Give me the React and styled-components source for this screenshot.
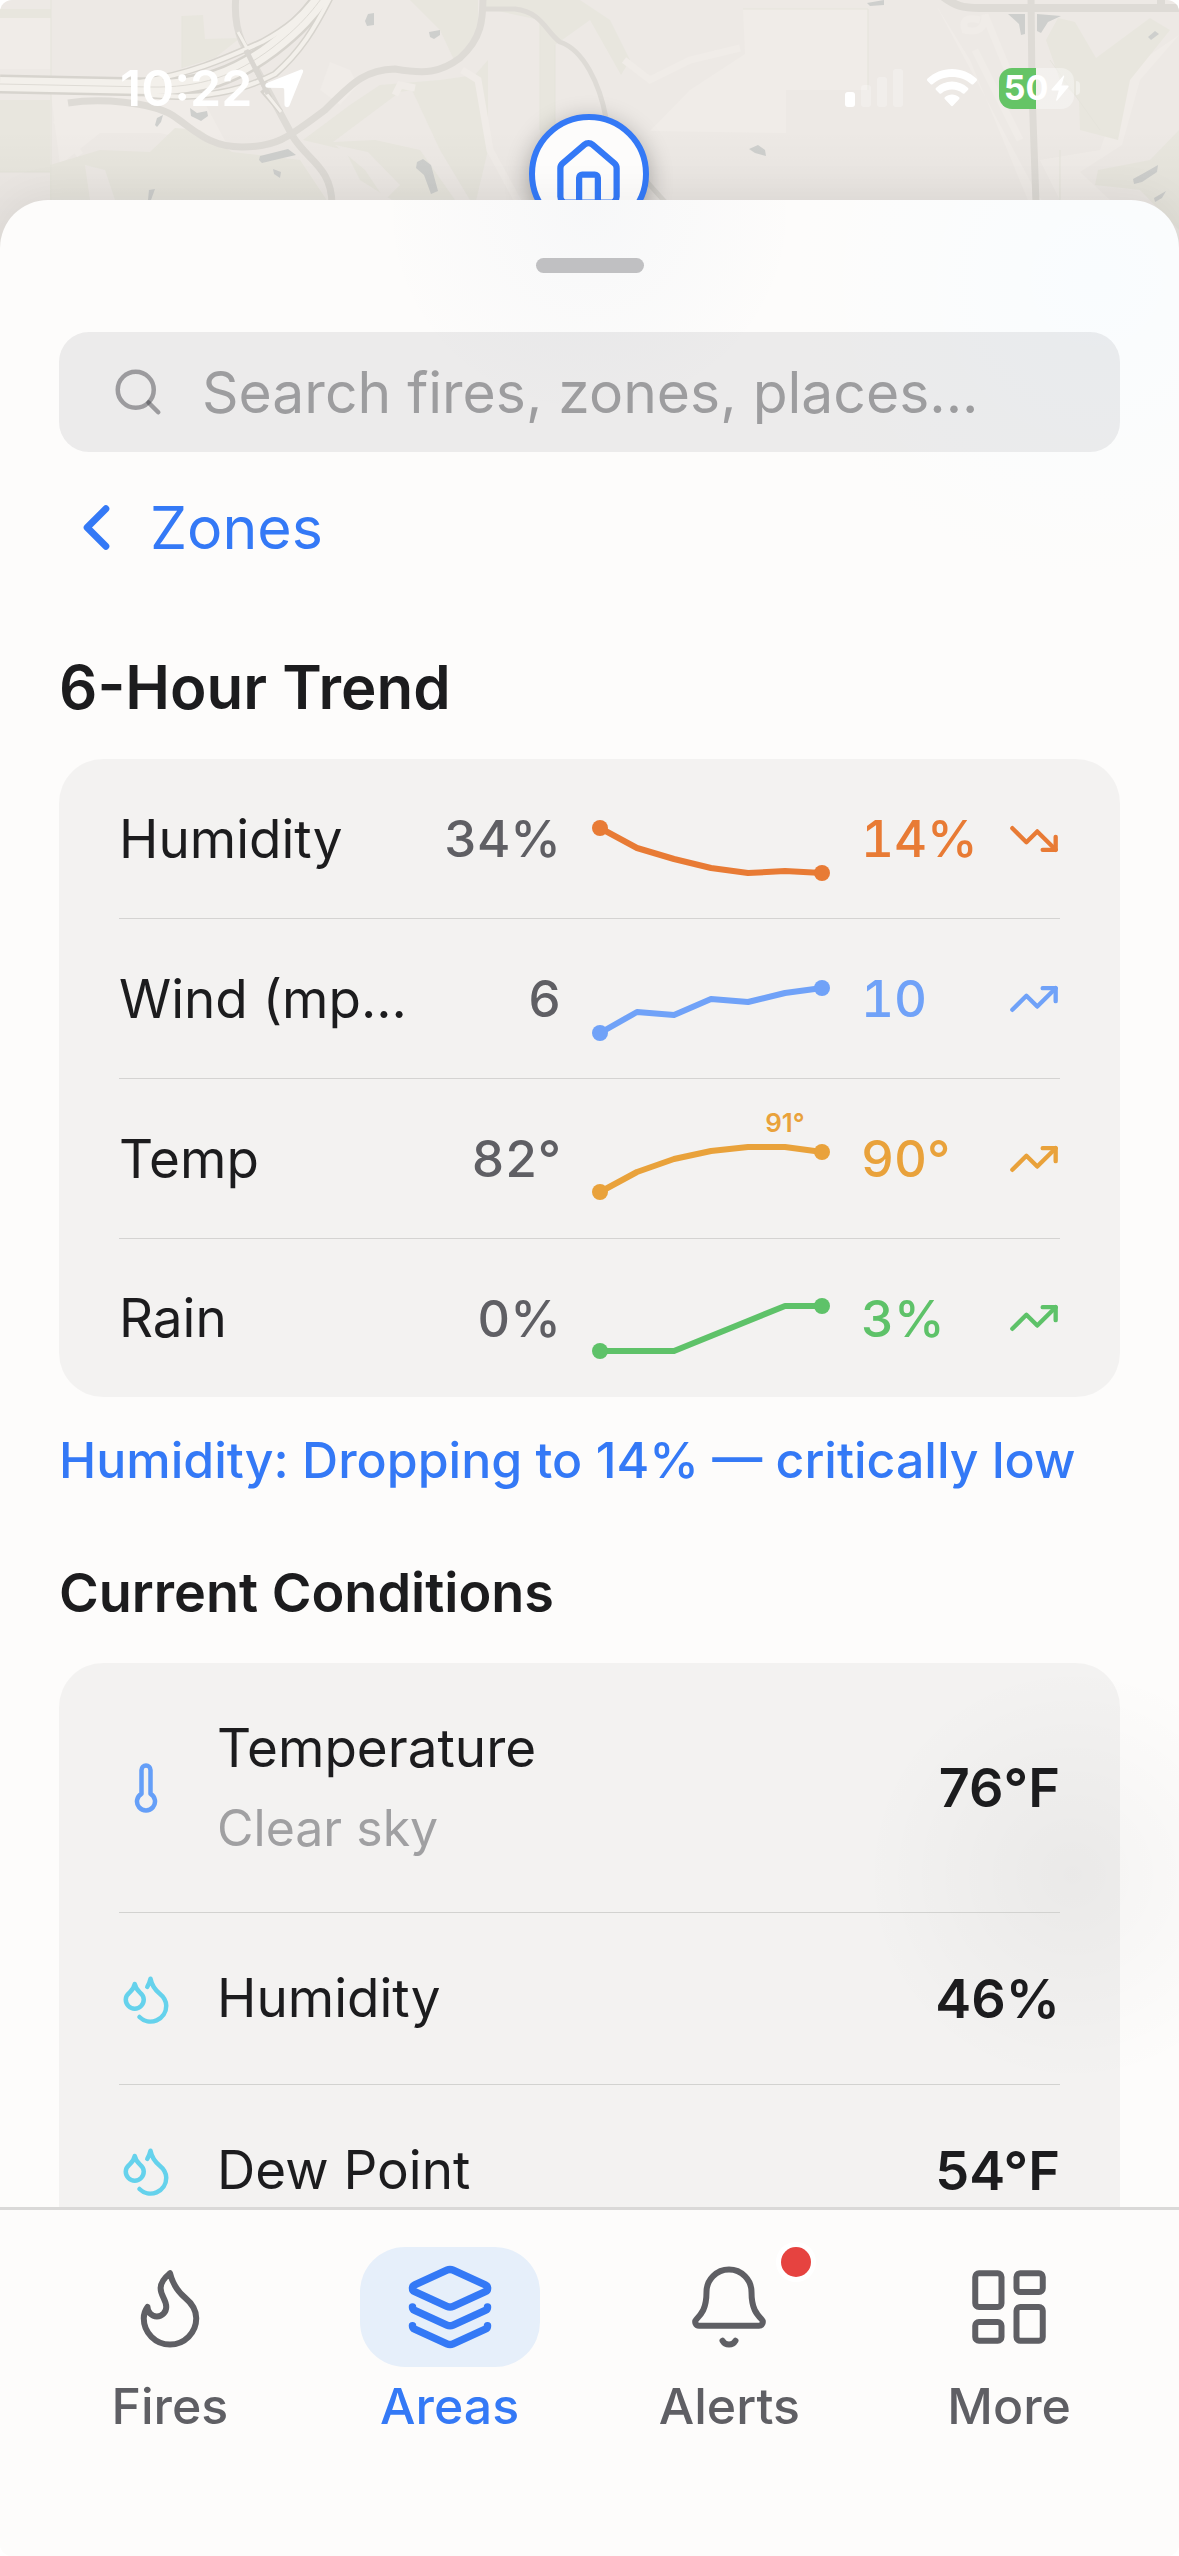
import React from "react";
import styled, { createGlobalStyle } from "styled-components";
import {
  Bell,
  ChevronLeft,
  Droplets,
  Flame,
  House,
  Layers,
  LayoutDashboard,
  Search,
  Thermometer,
  TrendingDown,
  TrendingUp,
} from "lucide-react";

const trends = [
  {
    label: "Humidity",
    from: "34%",
    to: "14%",
    color: "#e87b35",
    Icon: TrendingDown,
    points: [31, 51, 62, 71, 76, 74, 76],
  },
  {
    label: "Wind (mp...",
    from: "6",
    to: "10",
    color: "#70a2f8",
    Icon: TrendingUp,
    points: [76, 55, 58, 42, 45, 36, 31],
  },
  {
    label: "Temp",
    from: "82°",
    to: "90°",
    color: "#e9a23b",
    Icon: TrendingUp,
    points: [75, 55, 42, 34, 30, 30, 35],
    peak: { index: 5, text: "91°" },
  },
  {
    label: "Rain",
    from: "0%",
    to: "3%",
    color: "#5ec269",
    Icon: TrendingUp,
    points: [75, 75, 75, 60, 45, 30, 30],
  },
];

const conditions = [
  {
    label: "Temperature",
    note: "Clear sky",
    value: "76°F",
    color: "#659ff8",
    Icon: Thermometer,
  },
  { label: "Humidity", value: "46%", color: "#65d2ec", Icon: Droplets },
  { label: "Dew Point", value: "54°F", color: "#65d2ec", Icon: Droplets },
];

const tabs = [
  { label: "Fires", Icon: Flame },
  { label: "Areas", Icon: Layers, active: true },
  { label: "Alerts", Icon: Bell, alert: true },
  { label: "More", Icon: LayoutDashboard },
];

const Sparkline = ({ points, color, peak }) => {
  const x = index => 9 + index * 37;
  const last = points.length - 1;
  return (
    <ChartSvg width="240" height="84" viewBox="0 0 240 84" aria-hidden="true">
      <polyline
        points={points.map((y, index) => `${x(index)},${y}`).join(" ")}
        fill="none"
        stroke={color}
        strokeWidth="6"
        strokeLinejoin="round"
      />
      <circle cx={x(0)} cy={points[0]} r="8" fill={color} />
      <circle cx={x(last)} cy={points[last]} r="8" fill={color} />
      {peak && (
        <PeakText x={x(peak.index)} y="15" fill={color} textAnchor="middle">
          {peak.text}
        </PeakText>
      )}
    </ChartSvg>
  );
};

const MapDrawing = () => (
  <MapSvg viewBox="0 0 1179 260" preserveAspectRatio="xMidYMin slice" aria-hidden="true">
    <defs>
      <linearGradient id="mapShade" x1="0" y1="0" x2="0" y2="1">
        <stop offset="0.5" stopColor="#000" stopOpacity="0" />
        <stop offset="0.78" stopColor="#000" stopOpacity="0.03" />
        <stop offset="1" stopColor="#000" stopOpacity="0.05" />
      </linearGradient>
    </defs>
    <rect width="1179" height="260" fill="#ede9e5" />

    <g fill="#f0ece8">
      <path d="M0 18H51V69H0Z" />
      <path d="M51 94H200L230 150L160 133L100 133L60 165Z" />
      <path d="M330 62L350 70L358 85L340 105L320 90Z" />
      <path d="M743 9H868V90H824L786 90V133L650 131L690 90L745 54Z" />
      <path d="M936 5L1035 190L1045 205H1030L970 60Z" />
      <path d="M1179 35L1140 80L1122 145L1080 172L1110 200H1060L1040 160L1100 150L1128 70Z" />
    </g>
    <g fill="#e8e6de">
      <path d="M0 9H51V18H0Z" />
      <path d="M182 16L203 15L205 39L240 38L215 58L182 68Z" />
      <path d="M0 100H50V172H0Z" />
      <path d="M50 165L100 150L150 152L175 128L200 130L232 152L300 160L330 205H50Z" />
      <path d="M303 140L350 105L380 85L440 80L475 75L488 60V150L475 205H400L360 180L345 150Z" />
      <path d="M410 0H478V30L455 62L440 30Z" />
      <path d="M484 0H580L610 20L630 60L621 75L590 20L555 45V140H540V20L484 8Z" />
      <path d="M1046 40L1058 18L1075 22L1096 58L1150 18L1170 30L1130 80L1118 140L1080 130L1079 100L1060 80Z" />
      <path d="M1098 170L1150 160L1179 130V230L1140 190L1095 185Z" />
    </g>
    <g fill="#ede9e5">
      <path d="M335 145L368 152L400 185L385 200L365 170Z" />
      <path d="M400 92L412 90L440 150L470 200H455L420 150L375 140L333 142Z" />
      <path d="M85 165L105 170L115 200H90Z" />
    </g>
    <g fill="none" stroke="#e5e4db" strokeWidth="1">
      <path d="M51 0V200M182 16V68M555 45V140M868 9V90M540 20V130" />
      <path d="M0 172H50M743 9H868M1050 60L1100 130M1060 200V150" />
    </g>
    <g fill="none" stroke="#f0ece8" strokeWidth="7">
      <path d="M395 95L400 85L415 88M56 120L80 155M462 70L478 80L490 150L520 205" />
      <path d="M980 20Q960 15 965 30Q985 35 985 15L1020 100M975 50L1020 140" />
      <path d="M624 60L650 80L690 60L740 48" />
    </g>

    <g fill="none" stroke="#dedbd6" strokeWidth="7">
      <path d="M236 -5C234 15 236 28 242 42L292 135C306 160 332 166 332 205" />
      <path d="M68 103C100 98 150 102 172 115C195 130 208 147 242 147C278 147 290 136 325 110C350 86 362 70 395 69C425 74 440 73 460 58C482 38 483 20 483 -5" />
      <path d="M1031 -5L1032 90L1038 260" />
      <path d="M935 -10C955 8 965 8 980 8H1179M1161 -5V8" strokeWidth="8" />
      <path d="M484 9H515C542 12 546 32 560 42C584 50 600 85 606 118C622 155 640 175 668 205" strokeWidth="5" />
    </g>

    <g fill="none" strokeLinecap="butt">
      <g stroke="#d7d4ce">
        <path d="M0 84L150 87C200 88 235 76 272 48C298 28 312 12 326 -8" strokeWidth="19" />
        <path d="M140 82C190 74 222 60 262 42C288 28 302 16 318 -6" strokeWidth="7" />
        <path d="M150 95C200 100 240 92 275 74C300 52 314 30 332 -6" strokeWidth="7" />
        <path d="M238 32L270 98M262 90L281 112" strokeWidth="5" />
      </g>
      <g stroke="#f3f0eb">
        <path d="M0 84L150 87C200 88 235 76 272 48C298 28 312 12 326 -8" strokeWidth="14" />
        <path d="M140 82C190 74 222 60 262 42C288 28 302 16 318 -6" strokeWidth="4" />
        <path d="M150 95C200 100 240 92 275 74C300 52 314 30 332 -6" strokeWidth="4" />
        <path d="M238 32L248 50M265 92L281 112" strokeWidth="3" />
      </g>
      <path d="M0 84L150 87C200 88 235 76 272 48C298 28 312 12 326 -8" stroke="#dedbd5" strokeWidth="1" />
      <path d="M246 50L268 94" stroke="#d9d6d1" strokeWidth="5" />
    </g>

    <g fill="#cecfcd">
      <path d="M368 14L374 13V25L367 26L365 21Z" />
      <path d="M429 32L440 30V35L434 39L430 37Z" />
      <path d="M190 108L197 113L207 111L208 116L201 121L191 116Z" />
      <path d="M157 118L163 115L161 122L157 127L155 125Z" />
      <path d="M260 156L288 149L296 155L283 158L262 163L259 160Z" />
      <path d="M273 169L281 172L280 178L274 174Z" />
      <path d="M417 162L423 159L431 165L438 191L431 194L424 175L416 168Z" />
      <path d="M149 190L155 189L151 200H148Z" />
      <path d="M749 149L758 145L765 150L766 156L755 153Z" />
      <path d="M1008 14H1025V34L1021 35L1019 24Z" />
      <path d="M1037 14L1061 16L1048 22L1041 33L1037 31Z" />
      <path d="M1148 37L1155 31L1159 34L1151 40Z" />
      <path d="M1133 179L1144 173L1158 165L1157 172L1142 182L1134 184Z" />
      <path d="M1154 198L1166 191L1162 198L1155 202Z" />
      <path d="M867 3L884 0V5L870 6Z" />
    </g>
    <rect width="1179" height="260" fill="url(#mapShade)" />
  </MapSvg>
);

const StatusBar = () => (
  <StatusRow>
    <Clock>
      10:22
      <svg width="40" height="40" viewBox="0 0 40 40" aria-hidden="true">
        <path
          d="M37 1.600C38.600 1 39.600 2.400 39 4L25.500 37.500C24.400 40 20.600 39.600 20.500 36.800L20.200 21.800C20.200 20.600 19.600 20 18.400 20L4 19.700C0.800 19.600 0.400 16 3 14.900Z"
          fill="#fff"
        />
      </svg>
    </Clock>
    <Indicators>
      <svg width="60" height="38" viewBox="0 0 60 38" aria-hidden="true">
        <rect y="23" width="10" height="15" rx="3" fill="#fff" />
        <rect x="16" y="16" width="10" height="22" rx="3" fill="#fff" opacity="0.25" />
        <rect x="32" y="8" width="10" height="30" rx="3" fill="#fff" opacity="0.25" />
        <rect x="48" width="10" height="38" rx="3" fill="#fff" opacity="0.25" />
      </svg>
      <svg width="50" height="38" viewBox="0 0 50 38" fill="#fff" aria-hidden="true">
        <path d="M25 0C34.500 0 43 3.600 49.400 9.600C50.200 10.400 50.200 11.200 49.500 12L46.500 15C45.800 15.700 45 15.700 44.200 15C39 10.400 32.300 8 25 8C17.700 8 11 10.400 5.800 15C5 15.700 4.200 15.700 3.500 15L0.500 12C-0.200 11.200 -0.200 10.400 0.600 9.600C7 3.600 15.500 0 25 0Z" />
        <path d="M25 12.600C31 12.600 36.500 14.900 40.800 18.700C41.600 19.400 41.600 20.200 40.900 21L37.700 24.200C37 24.900 36.200 24.900 35.400 24.300C32.500 21.900 29 20.600 25 20.600C21 20.600 17.500 21.900 14.600 24.300C13.800 24.900 13 24.900 12.300 24.200L9.100 21C8.400 20.200 8.400 19.400 9.200 18.700C13.500 14.900 19 12.600 25 12.600Z" />
        <path d="M25 25.500C27.600 25.500 30 26.400 31.900 28C32.700 28.700 32.700 29.500 32 30.200L26.100 36.600C25.400 37.400 24.600 37.400 23.900 36.600L18 30.200C17.300 29.500 17.300 28.700 18.100 28C20 26.400 22.400 25.500 25 25.500Z" />
      </svg>
      <Battery>
        <BatteryBody>
          50
          <svg width="18" height="26" viewBox="0 0 18 26" aria-hidden="true">
            <path d="M12.500 0.500L0.600 14.200Q0 15.500 1.400 15.500H7.800L5 25.200Q5.400 26 6.200 25.400L17.600 11.800Q18 10.500 16.700 10.500H10.400L13.300 1Q13.200 0.200 12.500 0.500Z" fill="#fff" />
          </svg>
        </BatteryBody>
        <BatteryTip />
      </Battery>
    </Indicators>
  </StatusRow>
);

const TrendCard = () => (
  <Card>
    {trends.map(({ label, from, to, color, Icon, points, peak }) => (
      <TrendRow key={label}>
        <TrendLabel>{label}</TrendLabel>
        <TrendFrom>{from}</TrendFrom>
        <Sparkline points={points} color={color} peak={peak} />
        <TrendTo $color={color}>{to}</TrendTo>
        <Icon size={52} color={color} aria-hidden="true" />
      </TrendRow>
    ))}
  </Card>
);

const ConditionsCard = () => (
  <Card>
    {conditions.map(({ label, note, value, color, Icon }) => (
      <ConditionRow key={label}>
        <Icon size={54} color={color} aria-hidden="true" />
        <ConditionText>
          <ConditionLabel>{label}</ConditionLabel>
          {note && <ConditionNote>{note}</ConditionNote>}
        </ConditionText>
        <ConditionValue>{value}</ConditionValue>
      </ConditionRow>
    ))}
  </Card>
);

const TabBar = () => (
  <Nav aria-label="Main">
    {tabs.map(({ label, Icon, active, alert }) => (
      <Tab
        key={label}
        type="button"
        $active={active}
        aria-current={active ? "page" : undefined}
      >
        <TabIcon $active={active}>
          <Icon size={90} strokeWidth={active ? 2 : 1.6} aria-hidden="true" />
          {alert && <AlertDot />}
        </TabIcon>
        {label}
      </Tab>
    ))}
  </Nav>
);

const App = () => (
  <Screen>
    <GlobalStyle />
    <MapHeader>
      <MapDrawing />
      <StatusBar />
      <HomePin>
        <House size={75} aria-hidden="true" />
      </HomePin>
    </MapHeader>
    <Sheet>
      <Handle />
      <SearchBox>
        <Search size={54} aria-hidden="true" />
        <SearchInput
          type="text"
          aria-label="Search"
          placeholder="Search fires, zones, places..."
        />
      </SearchBox>
      <BackButton type="button">
        <ChevronLeft size={75} strokeWidth={2.2} aria-hidden="true" />
        Zones
      </BackButton>
      <MainTitle>6-Hour Trend</MainTitle>
      <TrendCard />
      <TrendNote>Humidity: Dropping to 14% — critically low</TrendNote>
      <SubTitle>Current Conditions</SubTitle>
      <ConditionsCard />
    </Sheet>
    <TabBar />
  </Screen>
);

export default App;

const GlobalStyle = createGlobalStyle`
  * {
    box-sizing: border-box;
  }
  body {
    margin: 0;
    background: #fff;
    color: #1c1c1e;
    font-family: Inter, "Liberation Sans", sans-serif;
  }
  h1, h2, p, ul {
    margin: 0;
    padding: 0;
  }
  button, input {
    font-family: inherit;
    border: 0;
    background: none;
    padding: 0;
  }
  svg {
    display: block;
    flex: none;
  }
`;

const Screen = styled.div`
  display: flex;
  flex-direction: column;
  height: 100vh;
  overflow: hidden;
  border-radius: 12px;
  background: #fdfcfb;
`;

const MapHeader = styled.header`
  position: relative;
  flex: none;
  height: 200px;
`;

const MapSvg = styled.svg`
  position: absolute;
  top: 0;
  left: 0;
  width: 100%;
  height: 260px;
`;

const StatusRow = styled.div`
  position: relative;
  display: flex;
  justify-content: space-between;
  align-items: center;
  padding: 58px 99px 0 120px;
  color: #fff;
`;

const Clock = styled.div`
  display: flex;
  align-items: center;
  gap: 12px;
  font-size: 50px;
  line-height: 60px;
  font-weight: 600;
`;

const Indicators = styled.div`
  display: flex;
  align-items: center;
  gap: 22px;
`;

const Battery = styled.div`
  display: flex;
  align-items: center;
  gap: 2px;
`;

const BatteryBody = styled.div`
  display: flex;
  justify-content: center;
  align-items: center;
  gap: 3px;
  width: 75px;
  height: 41px;
  border-radius: 13px;
  background: linear-gradient(90deg, #65c466 50%, rgba(255, 255, 255, 0.35) 50%);
  font-size: 34px;
  line-height: 40px;
  font-weight: 700;
`;

const BatteryTip = styled.span`
  width: 4px;
  height: 14px;
  border-radius: 0 4px 4px 0;
  background: rgba(255, 255, 255, 0.4);
`;

/* The sheet covers the lower part of the pin. */
const HomePin = styled.div`
  position: absolute;
  top: 114px;
  left: calc(50% - 61px);
  display: flex;
  justify-content: center;
  align-items: center;
  width: 120px;
  height: 120px;
  border: 6px solid #3479f6;
  border-radius: 50%;
  background: #fdfcfb;
  color: #3479f6;
  box-shadow: 0 6px 24px rgba(0, 0, 0, 0.3);
`;

const Sheet = styled.main`
  position: relative;
  display: flex;
  flex-direction: column;
  flex: 1;
  min-height: 0;
  overflow: hidden;
  padding: 58px 59px 0;
  border-radius: 48px 48px 0 0;
  background:
    radial-gradient(circle at 50% 10px, rgba(60, 110, 170, 0.03), transparent 210px),
    radial-gradient(circle at 93% 80px, rgba(248, 252, 255, 0.8), transparent 300px),
    radial-gradient(circle at 91% 1675px, rgba(0, 0, 0, 0.035), transparent 210px),
    #fdfcfb;
  box-shadow: 0 -6px 40px rgba(0, 0, 0, 0.05);

  > * {
    flex: none;
  }
`;

const Handle = styled.div`
  align-self: center;
  width: 108px;
  height: 15px;
  margin-bottom: 59px;
  border-radius: 8px;
  background: #c0c0c2;
`;

const SearchBox = styled.div`
  display: flex;
  align-items: center;
  gap: 37px;
  height: 120px;
  padding: 0 52px;
  border-radius: 30px;
  background: rgba(40, 40, 50, 0.08);
  color: rgba(60, 60, 67, 0.46);
`;

const SearchInput = styled.input`
  flex: 1;
  min-width: 0;
  height: 100%;
  font-size: 57px;
  color: #1c1c1e;
  outline: none;

  &::placeholder {
    color: #9d9d9f;
    opacity: 1;
  }
`;

const BackButton = styled.button`
  display: flex;
  align-items: center;
  align-self: flex-start;
  gap: 16px;
  height: 150px;
  font-size: 59px;
  color: #3479f6;
  cursor: pointer;
`;

const Title = styled.h2`
  line-height: 80px;
  font-weight: 600;
`;

const MainTitle = styled(Title)`
  margin: 45px 0 32px;
  font-size: 60px;
`;

const SubTitle = styled(Title)`
  margin: 55px 0 30px;
  font-size: 54px;
`;

const Card = styled.ul`
  padding: 0 60px;
  border-radius: 44px;
  background: rgba(0, 0, 0, 0.04);
  list-style: none;
`;

const TrendRow = styled.li`
  display: grid;
  grid-template-columns: minmax(0, 1fr) 120px 240px 117px 52px;
  align-items: center;
  column-gap: 30px;
  height: 160px;

  &:not(:last-child) {
    border-bottom: 1px solid #d4d3d2;
  }
  &:last-child {
    height: 158px;
  }
`;

const TrendLabel = styled.span`
  font-size: 53px;
  line-height: 76px;
  white-space: nowrap;
`;

const TrendFrom = styled.span`
  font-size: 51px;
  font-weight: 500;
  font-variant-numeric: tabular-nums;
  text-align: right;
  color: #5f5f64;
`;

const TrendTo = styled.span`
  font-size: 51px;
  font-weight: 500;
  font-variant-numeric: tabular-nums;
  color: ${props => props.$color};
`;

const ChartSvg = styled.svg`
  overflow: visible;
`;

const PeakText = styled.text`
  font-size: 26px;
  font-weight: 600;
`;

const TrendNote = styled.p`
  margin-top: 25px;
  font-size: 50px;
  line-height: 76px;
  font-weight: 500;
  white-space: nowrap;
  color: #3479f6;
`;

const ConditionRow = styled.li`
  display: flex;
  align-items: center;
  gap: 44px;
  padding: 45px 0;

  &:not(:last-child) {
    border-bottom: 1px solid #d2d2d0;
  }
`;

const ConditionText = styled.div`
  flex: 1;
`;

const ConditionLabel = styled.p`
  font-size: 53px;
  line-height: 81px;
`;

const ConditionNote = styled.p`
  font-size: 50px;
  line-height: 78px;
  color: #a0a0a2;
`;

const ConditionValue = styled.span`
  font-size: 54px;
  font-weight: 600;
`;

const Nav = styled.nav`
  position: relative;
  display: flex;
  flex: none;
  height: 349px;
  padding: 37px 30px 0;
  border-top: 3px solid #dad9d8;
  background: #fdfcfb;
`;

const Tab = styled.button`
  display: flex;
  flex: 1;
  flex-direction: column;
  align-items: center;
  align-self: flex-start;
  font-size: 50px;
  line-height: 78px;
  font-weight: 500;
  color: ${props => (props.$active ? "#3479f6" : "#5f5f64")};
  cursor: pointer;
`;

const TabIcon = styled.span`
  position: relative;
  display: flex;
  justify-content: center;
  align-items: center;
  width: 180px;
  height: 120px;
  border-radius: 45px;
  background: ${props => (props.$active ? "#e6effa" : "transparent")};
`;

const AlertDot = styled.span`
  position: absolute;
  top: 0;
  right: 8px;
  width: 30px;
  height: 30px;
  border-radius: 50%;
  background: #e64340;
  box-shadow: 0 0 0 5px #fff;
`;
